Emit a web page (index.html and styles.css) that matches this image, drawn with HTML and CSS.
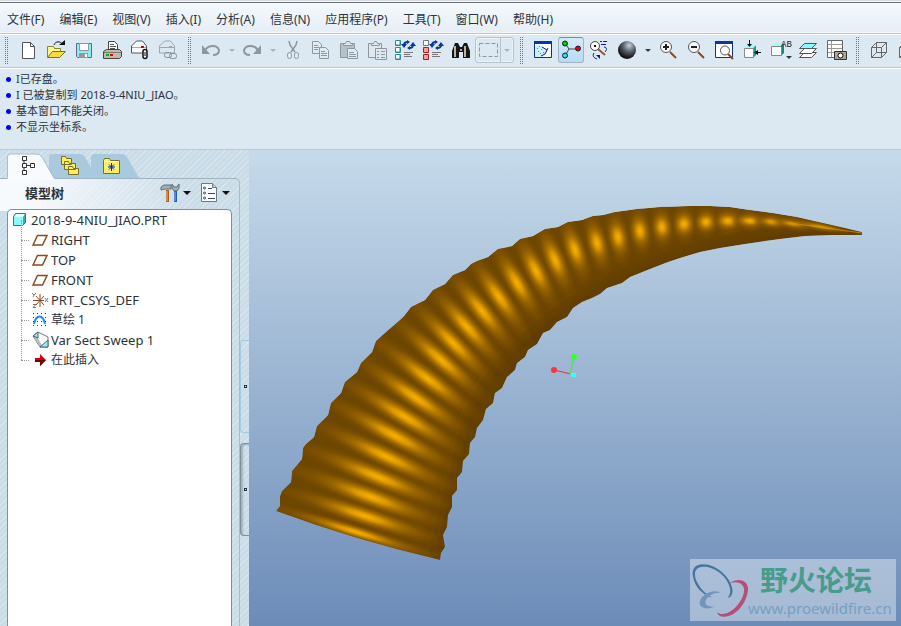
FILE: index.html
```html
<!DOCTYPE html>
<html lang="zh-CN">
<head>
<meta charset="utf-8">
<title>2018-9-4NIU_JIAO</title>
<link rel="stylesheet" href="styles.css">
</head>
<body>
<nav class="menubar">
  <button>文件(F)</button><button>编辑(E)</button><button>视图(V)</button><button>插入(I)</button><button>分析(A)</button><button>信息(N)</button><button>应用程序(P)</button><button>工具(T)</button><button>窗口(W)</button><button>帮助(H)</button>
</nav>

<div class="toolbar">
  <span class="grip"></span>
  <div class="group">
    <button class="tool" aria-label="新建"><svg viewBox="0 0 20 20"><path d="M4.500 2.500h8l4 4v12h-12z" fill="#fff" stroke="#555"/><path d="M12.500 2.500v4h4" fill="none" stroke="#555"/></svg></button>
    <button class="tool" aria-label="打开"><svg viewBox="0 0 20 20"><path d="M1.500 17V6.500h6l1 2h6v3" fill="#fffb90" stroke="#8a8433"/><path d="M1.500 17.500l5-6h13l-6 6z" fill="#f6dc45" stroke="#77712b"/><path d="M8 5c1-4 7-4 8-1" fill="none" stroke="#111"/><path d="M13 5h6V0z" fill="#111"/></svg></button>
    <button class="tool" aria-label="保存"><svg viewBox="0 0 20 20"><path d="M2.500 3.500h15v14h-14l-1-1z" fill="#8aeef0" stroke="#668"/><path d="M5.500 3.500h9v7h-9z" fill="#fff" stroke="#89a"/><path d="M5 13h9v5H5z" fill="#999"/><path d="M11 14h2v3h-2z" fill="#fff"/></svg></button>
    <button class="tool" aria-label="打印"><svg viewBox="0 0 20 20"><path d="M6.500 10V1.500h6l3 3V10" fill="#fff" stroke="#444"/><path d="M8 4.500h4M8 6.500h6M8 8.500h5" stroke="#555"/><path d="M1.500 11.500l3-2h13l2 2v5l-2 2h-16z" fill="#bdbab0" stroke="#444"/><path d="M2 12.500h17" stroke="#777"/><path d="M4 14h3v2H4z" fill="#0b0"/><path d="M8 14h3v2H8z" fill="#e00"/></svg></button>
    <button class="tool" aria-label="发送"><svg viewBox="0 0 20 20"><path d="M1.500 13V6l5-5h6l4 5v7z" fill="#fff" stroke="#555"/><path d="M2 7.500h14" stroke="#aaa"/><path d="M11 6h3v2h-3z" fill="#d00"/><rect x="13" y="9.500" width="4" height="9" rx="2" fill="#fff" stroke="#111" stroke-width="1.500"/><path d="M15 12v4" stroke="#111"/></svg></button>
    <button class="tool" aria-label="发送链接"><svg viewBox="0 0 20 20"><path d="M1.500 13V6l5-5h6l4 5v7z" fill="#dde7f0" stroke="#9aa9b7"/><path d="M2 7.500h14M11 6.500h3" stroke="#9aa9b7"/><rect x="6.500" y="12.500" width="7" height="5" rx="2" fill="none" stroke="#858f9a"/><rect x="11.500" y="13.500" width="7" height="5" rx="2" fill="none" stroke="#858f9a"/></svg></button>
  </div>
  <span class="grip"></span>
  <div class="group">
    <button class="tool" aria-label="撤消"><svg viewBox="0 0 20 20"><path d="M4 11c2-6 12-7 14-1 0 3-2 5-6 5" fill="none" stroke="#8d979f" stroke-width="2"/><path d="M1 5v9h8z" fill="#8d979f"/></svg></button>
    <button class="drop dim" aria-label="撤消列表"></button>
    <button class="tool" aria-label="重做"><svg viewBox="0 0 20 20"><path d="M16 11C14 5 4 4 2 10c0 3 2 5 6 5" fill="none" stroke="#8d979f" stroke-width="2"/><path d="M19 5v9h-8z" fill="#8d979f"/></svg></button>
    <button class="drop dim" aria-label="重做列表"></button>
    <button class="tool" aria-label="剪切"><svg viewBox="0 0 20 20" fill="none" stroke="#8d979f"><path d="M6 1l1 4 5 7M14 1l-1 4-5 7" stroke-width="1.500"/><rect x="4.500" y="12.500" width="4" height="6" rx="2"/><rect x="11.500" y="12.500" width="4" height="6" rx="2"/></svg></button>
    <button class="tool" aria-label="复制"><svg viewBox="0 0 20 20" fill="#e0eaf1" stroke="#8d979f"><path d="M1.500 1.500h6l3 3v9h-9z"/><path d="M3 5.500h4M3 7.500h5M3 9.500h4"/><path d="M8.500 7.500h6l3 3v8h-9z"/><path d="M10 11.500h4M10 13.500h6M10 15.500h6"/></svg></button>
    <button class="tool" aria-label="粘贴"><svg viewBox="0 0 20 20" fill="#b7c1c8" stroke="#8d979f"><path d="M1.500 3.500h14v14h-14z"/><path d="M4.500 5.500v-2h2l1-2h3l1 2h2v2z" fill="#dce6ed"/><path d="M8.500 8.500h7l3 3v7h-10z" fill="#e0eaf1"/><path d="M10 12.500h5M10 14.500h7M10 16.500h7"/></svg></button>
    <button class="tool" aria-label="选择性粘贴"><svg viewBox="0 0 20 20" fill="#dfe8ee" stroke="#8d979f"><path d="M1.500 3.500h13v14h-13z"/><path d="M4.500 5.500v-2h2l1-2h2l1 2h2v2z"/><path d="M8.500 8.500h11v11h-11z"/><path d="M10 11.500h2M14 11.500h4M10 14.500h2M14 14.500h4M10 17.500h2M14 17.500h4"/></svg></button>
    <button class="tool" aria-label="再生"><svg viewBox="0 0 20 20"><g fill="#fff" stroke="#2d8d8d"><path d="M.5.5h5v5h-5zM.5 7.500h5v5h-5zM.5 14.500h5v5h-5z"/></g><path d="M5 1v4H1M5 8v4H1M5 15v4H1" fill="none" stroke="#2d8d8d"/><g fill="none" stroke="#0836a4" stroke-width="2"><path d="M9 5c0-2 1-3 4-3M18 5c0 2-1 3-4 3"/></g><path d="M6 4h6L9 8zM15 6h6l-3-4zM12 0v4l3-2zM15 6v4l-3-2z" fill="#0836a4"/><path d="M9 12.500h9M9 14.500h6M9 16.500h8" stroke="#777"/></svg></button>
    <button class="tool" aria-label="再生管理器"><svg viewBox="0 0 20 20"><path d="M.5.500h5v5h-5z" fill="#fff" stroke="#777"/><path d="M.5 7.500h5v5h-5zM.5 14.500h5v5h-5z" fill="#ff9a9a" stroke="#b01c1c"/><g fill="none" stroke="#0836a4" stroke-width="2"><path d="M9 5c0-2 1-3 4-3M18 5c0 2-1 3-4 3"/></g><path d="M6 4h6L9 8zM15 6h6l-3-4zM12 0v4l3-2zM15 6v4l-3-2z" fill="#0836a4"/><path d="M9 12.500h9M9 14.500h6M9 16.500h8" stroke="#777"/></svg></button>
    <button class="tool" aria-label="查找"><svg viewBox="0 0 20 20"><path d="M4 3h3l2 4h2l2-4h3l3 8v7h-7v-6H8v6H1v-7z" fill="#161616"/><path d="M4 6v11M14 6v11" stroke="#b8b5a0" stroke-width="2"/><path d="M9 9h2v2H9z" fill="#aaa"/></svg></button>
    <span class="select-box"><button class="tool" aria-label="选取框"><svg viewBox="0 0 20 20"><path d="M1.500 3.500h18v13h-18z" fill="none" stroke="#8997a3" stroke-dasharray="4 2"/></svg></button><button class="drop dim" aria-label="选取列表"></button></span>
  </div>
  <span class="grip"></span>
  <div class="group">
    <button class="tool" aria-label="重画"><svg viewBox="0 0 20 20"><path d="M1.500 1.500h17v16h-17z" fill="#fff" stroke="#0a3589"/><path d="M1 1h18v3H1z" fill="#0639a0"/><path d="M2 5l7 1 6 5-5 6H2z" fill="#cdf0ff"/><path d="M8 16l4-2 2-4 1-2M9 7l5 3" stroke="#15205e" fill="none"/><path d="M4 8.500h1M6 6.500h1M5 11.500h1M8 9.500h1M10 12.500h1M7 13.500h1" stroke="#0ad"/></svg></button>
    <button class="tool pressed" aria-label="旋转中心"><svg viewBox="0 0 20 20"><path d="M4 3l4 6h8M8 9l-4 7" fill="none" stroke="#444"/><g stroke="#123"><circle cx="4" cy="3.500" r="2.500" fill="#0c0"/><circle cx="17" cy="8.500" r="2.500" fill="#e00"/><circle cx="4" cy="15.500" r="2.500" fill="#3dd"/></g></svg></button>
    <button class="tool" aria-label="定向模式"><svg viewBox="0 0 20 20"><path d="M9 9l7 6" stroke="#9d5527" stroke-width="2"/><circle cx="6" cy="6" r="4.500" fill="#fff" stroke="#444"/><path d="M5 5h2v2H5z" fill="#111"/><path d="M11 1.500h2M14 1.500h4M12 4.500h5M5 13c-2 3 0 5 3 6M15 7c3 0 3 3 1 5" fill="none" stroke="#1119a0"/><path d="M7 15h4v4z" fill="#1119a0"/></svg></button>
    <button class="tool" aria-label="外观库"><svg viewBox="0 0 20 20"><circle cx="10" cy="10" r="9" fill="url(#ball)"/></svg></button>
    <button class="drop" aria-label="外观列表"></button>
    <button class="tool" aria-label="放大"><svg viewBox="0 0 20 20"><path d="M12 12l6 6" stroke="#924619" stroke-width="2"/><circle cx="8" cy="7" r="5.500" fill="#f8fcff" stroke="#555"/><path d="M5 7h6M8 4v6" stroke="#222" stroke-width="2"/></svg></button>
    <button class="tool" aria-label="缩小"><svg viewBox="0 0 20 20"><path d="M12 12l6 6" stroke="#924619" stroke-width="2"/><circle cx="8" cy="7" r="5.500" fill="#f8fcff" stroke="#555"/><path d="M5 7h6" stroke="#222" stroke-width="2"/></svg></button>
    <button class="tool" aria-label="重新调整"><svg viewBox="0 0 20 20"><path d="M1.500 1.500h17v16h-17z" fill="#fff" stroke="#0a3589"/><path d="M1 1h18v3H1z" fill="#0639a0"/><path d="M14 14l5 5" stroke="#924619" stroke-width="2"/><circle cx="11" cy="10.500" r="4.500" fill="#fff" stroke="#555"/></svg></button>
    <button class="tool" aria-label="重定向"><svg viewBox="0 0 20 20"><path d="M11 8l3-3v10l-3 3z" fill="#1b9999"/><path d="M2 8l3-3h9l-3 3z" fill="#9ff"/><path d="M2.500 8.500h9v9h-9z" fill="#fff" stroke="#888"/><path d="M7.500 0v5M13 12.500h6" stroke="#111"/><path d="M5 4h5L7.500 7zM16 10v5l-4-2.500z" fill="#111"/></svg></button>
    <button class="tool" aria-label="已命名视图"><svg viewBox="0 0 20 20"><path d="M11 6l3-3v10l-3 3z" fill="#188"/><path d="M2 6l3-3h6v3z" fill="#9ff"/><path d="M1.500 6.500h10v9h-10z" fill="#fff" stroke="#888"/><text x="11" y="7" class="ab">AB</text><path d="M16 16h6l-3 3z" fill="#333"/></svg></button>
    <button class="tool" aria-label="层"><svg viewBox="0 0 20 20" fill="#fff" stroke="#555"><path d="M1.500 17.500h12l5-5h-12z"/><path d="M1.500 13.500h12l5-5h-12z"/><path d="M1.500 8.500h12l5-5h-12z" fill="#8ff"/></svg></button>
    <button class="tool" aria-label="视图管理器"><svg viewBox="0 0 20 20"><path d="M1.500.500h15v17h-15z" fill="#fff" stroke="#666"/><path d="M5.500 1v16M2 4.500h14M2 8.500h14M2 12.500h14" stroke="#999"/><path d="M8.500 11.500h12v8h-12z" fill="#aaa797" stroke="#333"/><circle cx="14.500" cy="15.500" r="2.500" fill="#fff" stroke="#111"/></svg></button>
  </div>
  <span class="grip"></span>
  <div class="group">
    <button class="tool" aria-label="线框"><svg viewBox="0 0 20 20" fill="none" stroke="#666"><path d="M2.500 7.500h10v10h-10zM7.500 2.500h10v10h-10zM2.500 7.500l5-5M12.500 7.500l5-5M2.500 17.500l5-5M12.500 17.500l5-5"/></svg></button>
    <button class="tool" aria-label="隐藏线"><svg viewBox="0 0 20 20" fill="none" stroke="#666"><path d="M2.500 7.500h10v10h-10zM7.500 2.500h10v10h-10zM2.500 7.500l5-5M12.500 7.500l5-5M2.500 17.500l5-5"/></svg></button>
  </div>
</div>

<ul class="messages">
  <li>I已存盘。</li>
  <li>I 已被复制到 2018-9-4NIU_JIAO。</li>
  <li>基本窗口不能关闭。</li>
  <li>不显示坐标系。</li>
</ul>

<div class="workspace">
  <aside class="sidebar">
    <div class="tabs">
      <button class="tab" aria-label="模型树"><svg viewBox="0 0 48 26"><path d="M.5 27V4q0-3 3-3H29q4 0 6 3l13 23z" fill="#f8fbfe"/><path d="M.5 25V4q0-3 3-3H29q4 0 6 3l12 21" fill="none" stroke="#a8bcca"/><g fill="#fff" stroke="#333"><path d="M17 6v14M17 12.500h6" /><path d="M15.500 3.500h4v4h-4zM15.500 10.500h4v4h-4zM15.500 17.500h4v4h-4zM23.500 10.500h4v4h-4z"/></g></svg></button>
      <button class="tab" aria-label="文件夹浏览器"><svg viewBox="0 0 48 26"><path d="M0 25V4q0-3 3-3h27q4 0 6 3l12 21z" fill="#a9c9df"/><g fill="#ffec58" stroke="#77702a"><path d="M12.500 11.500v-8h4l1 2h5v6zM15.500 16.500v-8h4l1 2h6v6zM19.500 21.500v-8h4l1 2h5v6z"/></g></svg></button>
      <button class="tab" aria-label="收藏夹"><svg viewBox="0 0 48 26"><path d="M0 25V4q0-3 3-3h27q4 0 6 3l12 21z" fill="#a9c9df"/><path d="M12.500 20.500v-13l1-2h5l1 2h9v13z" fill="#fff06a" stroke="#77702a"/><path d="M13 8.500h15" stroke="#fff"/><path d="M20.500 10v8M17 14h7M18 11.500l5 5M23 11.500l-5 5" stroke="#1020c0"/></svg></button>
    </div>
    <div class="dock">
      <section class="panel">
        <header class="panel-head">
          <h2>模型树</h2>
          <button class="tool" aria-label="设置"><svg viewBox="0 0 20 20"><path d="M7.500 7v12" stroke="#b05a1c" stroke-width="3"/><path d="M7 8v10" stroke="#ffb868"/><path d="M1 7V4l3-2h7v4H5z" fill="#9db2ba" stroke="#5d6d75"/><path d="M15.500 8v11" stroke="#2459c0" stroke-width="3"/><path d="M15 9v9" stroke="#8bbcff"/><path d="M12 1v4l2 3h3l2-3V1l-2 3h-3z" fill="#9db2ba" stroke="#5d6d75"/></svg></button>
          <button class="drop strong" aria-label="设置列表"></button>
          <button class="tool" aria-label="显示"><svg viewBox="0 0 20 20"><path d="M2.500.5h11l4 4v14h-15z" fill="#f7faff" stroke="#6a7888"/><path d="M13.500.5v4h4" fill="#bcd" stroke="#6a7888"/><g fill="none" stroke="#445"><circle cx="5.500" cy="5" r="1"/><circle cx="5.500" cy="10" r="1"/><circle cx="5.500" cy="15" r="1"/><path d="M9 5.500h4M9 10.500h7M9 15.500h7"/></g></svg></button>
          <button class="drop strong" aria-label="显示列表"></button>
        </header>
        <div class="tree">
          <div class="root"><svg class="node" viewBox="0 0 16 16"><path d="M1.500 4.500l2-3h10v9l-3 3h-9z" fill="#4aa5a8" stroke="#3c7377"/><path d="M2 5h9v8H2z" fill="#8ff8ff"/><path d="M2 5l2-3h9l-2 3z" fill="#d9ffff"/></svg>2018-9-4NIU_JIAO.PRT</div>
          <ul class="branch">
            <li><svg class="node" viewBox="0 0 16 16"><path d="M1 13l4.500-9.500H15L10.500 13z" fill="#fff" stroke="#8b4a1c" stroke-width="1.500"/></svg>RIGHT</li>
            <li><svg class="node" viewBox="0 0 16 16"><path d="M1 13l4.500-9.500H15L10.500 13z" fill="#fff" stroke="#8b4a1c" stroke-width="1.500"/></svg>TOP</li>
            <li><svg class="node" viewBox="0 0 16 16"><path d="M1 13l4.500-9.500H15L10.500 13z" fill="#fff" stroke="#8b4a1c" stroke-width="1.500"/></svg>FRONT</li>
            <li><svg class="node" viewBox="0 0 16 16" fill="none"><path d="M1 8.500h11M8 2v13M4 4l8 9M12 4l-8 9" stroke="#8b4a1c"/><path d="M0 1l2 2 2-2M2 3l-1 2M1 12.500h3l-3 3h3M13 6l3 4M16 6l-3 4" stroke="#777"/></svg>PRT_CSYS_DEF</li>
            <li class="cjk"><svg class="node" viewBox="0 0 16 16"><path d="M1 1.500h14M1 5.500h14M1 9.500h14M1 13.500h14" stroke="#223078" stroke-dasharray="1 3"/><path d="M2 12c2-10 9-10 11 0" fill="none" stroke="#148bff" stroke-width="2"/></svg>草绘 1</li>
            <li><svg class="node" viewBox="0 0 16 16"><path d="M1 4l5-4 10 5v10H8z" fill="#fff" stroke="#777"/><path d="M1 4l7 11h3L5 5z" fill="#bbb"/><path d="M1 4l5-4v6zM8 15l8-7v7z" fill="#94edee" stroke="#467"/></svg>Var Sect Sweep 1</li>
            <li class="cjk"><svg class="node" viewBox="0 0 16 16"><path d="M3 6h5V2l6 6-6 6v-4H3z" fill="#d80000"/><path d="M3 8h11l-6 6v-4H3z" fill="#6d0000"/></svg>在此插入</li>
          </ul>
        </div>
      </section>
      <div class="sashes"><button class="sash" aria-label="浏览器"></button><button class="sash raised" aria-label="导航器"></button></div>
    </div>
  </aside>

  <main class="view">
    <svg class="model" viewBox="249 150 652 476" role="img" aria-label="牛角模型">
      <defs>
        <radialGradient id="ball" cx=".62" cy=".25" r=".7"><stop offset="0" stop-color="#c5d2dc"/><stop offset=".5" stop-color="#56606a"/><stop offset="1" stop-color="#111"/></radialGradient>
        <radialGradient id="band"><stop offset="0" stop-color="#966300"/><stop offset=".55" stop-color="#8b5a00" stop-opacity=".75"/><stop offset="1" stop-color="#7a4e00" stop-opacity="0"/></radialGradient>
        <radialGradient id="shine"><stop offset="0" stop-color="#fbb300"/><stop offset=".3" stop-color="#e6a000" stop-opacity=".85"/><stop offset=".65" stop-color="#b87c00" stop-opacity=".4"/><stop offset="1" stop-color="#905e00" stop-opacity="0"/></radialGradient>
        <filter id="soft" x="-10%" y="-10%" width="120%" height="120%"><feGaussianBlur stdDeviation="9"/></filter>
        <clipPath id="outline"><path id="horn" d="M276 511L280 506 280 496 282 491 291 482 292 471 302 459 303 448 306 444 314 437 317 426 328 415 331 403 341 393 345 382 357 372 361 363 372 352 376 341 387 331 400 320 404 316 411 307 415 305 425 300 433 290 445 284 453 275 465 270 471 264 477 261 488 257 498 249 512 246 520 239 533 236 545 229 558 227 568 222 582 220 593 216 603 215 615 212 637 209 660 207 690 206 710 206 730 207 750 210 773 213 797 217 823 223 845 228 862 232 862 235 833 235 805 236 780 239 765 241 745 244 720 248 700 252 680 258 668 262 650 269 630 277 622 283 607 288 600 294 592 298 582 302 573 308 567 317 557 322 550 330 543 333 537 344 528 350 525 357 517 363 515 370 507 377 502 388 495 393 493 403 486 409 483 420 477 428 475 437 470 443 469 454 463 461 462 472 457 478 457 490 452 496 452 507 448 515 447 527 443 535 445 547 441 553 440 560Q355 540 276 511z"/></clipPath>
        <g id="rib"><ellipse rx="1.200" ry="1.150" fill="url(#band)"/><ellipse rx=".72" ry=".95" fill="url(#shine)"/></g>
      </defs>
      <g clip-path="url(#outline)">
        <use href="#horn" fill="#6d4600"/>
        <use href="#rib" transform="translate(356 532) rotate(17) scale(90 7)"/>
        <use href="#rib" transform="translate(365 516) rotate(18) scale(88 10)"/>
        <use href="#rib" transform="translate(371 497) rotate(20) scale(86 11)"/>
        <use href="#rib" transform="translate(378 477) rotate(22) scale(84 11)"/>
        <use href="#rib" transform="translate(387 457) rotate(25) scale(82 11)"/>
        <use href="#rib" transform="translate(395 436) rotate(28) scale(80 11)"/>
        <use href="#rib" transform="translate(405 417) rotate(31) scale(77 11)"/>
        <use href="#rib" transform="translate(416 398) rotate(34) scale(74 11)"/>
        <use href="#rib" transform="translate(428 379) rotate(37) scale(70 11)"/>
        <use href="#rib" transform="translate(441 360) rotate(41) scale(66 11)"/>
        <use href="#rib" transform="translate(453 343) rotate(45) scale(62 11)"/>
        <use href="#rib" transform="translate(467 327) rotate(48) scale(58 11)"/>
        <use href="#rib" transform="translate(482 311) rotate(51) scale(54 11)"/>
        <use href="#rib" transform="translate(499 297) rotate(55) scale(50 11)"/>
        <use href="#rib" transform="translate(517 283) rotate(59) scale(46 11)"/>
        <use href="#rib" transform="translate(536 271) rotate(63) scale(42 11)"/>
        <use href="#rib" transform="translate(555 260) rotate(67) scale(38 11)"/>
        <use href="#rib" transform="translate(575 250) rotate(71) scale(34 11)"/>
        <use href="#rib" transform="translate(597 243) rotate(75) scale(30 11)"/>
        <use href="#rib" transform="translate(618 237) rotate(79) scale(27 11)"/>
        <use href="#rib" transform="translate(640 231) rotate(82) scale(24 11)"/>
        <use href="#rib" transform="translate(662 227) rotate(85) scale(21 11)"/>
        <use href="#rib" transform="translate(684 224) rotate(88) scale(18 12)"/>
        <use href="#rib" transform="translate(706 222) rotate(90) scale(15 12)"/>
        <use href="#rib" transform="translate(728 221) rotate(92) scale(13 14)"/>
        <use href="#rib" transform="translate(750 221) rotate(94) scale(10 16)"/>
        <use href="#rib" transform="translate(773 222) rotate(96) scale(8 18)"/>
        <use href="#rib" transform="translate(795 224) rotate(98) scale(7 22)"/>
        <use href="#rib" transform="translate(822 227) rotate(100) scale(5 30)"/>
        <path d="M862 236Q700 237 592 300T470 445l-30 116" fill="none" stroke="#4b2f00" stroke-opacity=".55" stroke-width="16" filter="url(#soft)"/>
        <path d="M790 223l72 10" stroke="#d99500" stroke-opacity=".7"/>
      </g>
      <path d="M554 370l17 4" stroke="#f03030"/><path d="M570 374l4-17" stroke="#30f030"/>
      <circle cx="554" cy="370" r="3" fill="#f33"/><circle cx="574" cy="357" r="3" fill="#3f3"/><path d="M570 373h6v4h-4z" fill="#3ff"/>
    </svg>
    <div class="watermark">
      <svg viewBox="0 0 60 62" fill-rule="evenodd"><path d="M3 17C1 5 10 3 19 5 33 9 43 21 44 31c0 5-2 8-5 8 4-5 3-10 0-16C34 13 22 6 13 7 3 8 4 17 8 24c3 6 8 11 15 15C13 36 5 28 3 17z" fill="#45759f"/><path d="M41 24c8-6 18-4 19 5 0 12-9 26-20 29-7 2-11 0-12-4 4 3 9 2 14-1 8-5 14-15 14-22 0-6-6-10-15-7z" fill="#b54e78"/><path d="M32 34c-9-5-20 2-22 9-1 7 7 9 16 5-6 1-11-1-10-5 1-5 8-10 16-9z" fill="#7094bc"/></svg>
      <div><strong>野火论坛</strong><span>www.proewildfire.cn</span></div>
    </div>
  </main>
</div>
</body>
</html>
```
FILE: styles.css
```css
* { box-sizing: border-box; }
body {
  margin: 0;
  height: 100vh;
  display: flex;
  flex-direction: column;
  overflow: hidden;
  background: #dce9f2;
  color: #2c333a;
  font: 12px/16px "Noto Sans", "Noto Sans CJK SC", sans-serif;
}
button {
  margin: 0;
  padding: 0;
  border: 0;
  background: none;
  color: inherit;
  font: inherit;
}
ul { list-style: none; margin: 0; padding: 0; }
svg { display: block; overflow: visible; }

.menubar {
  display: flex;
  flex: none;
  gap: 15px;
  height: 34px;
  padding: 5px 7px 0;
  border-top: 1px solid #d5dbe0;
  border-bottom: 1px solid #b4c8d8;
  background: linear-gradient(#6b7075 0 1px, transparent 1px) 0 1px / 100% 2px no-repeat, linear-gradient(#f4fafd, #e6edf5);
  box-shadow: inset 0 -1px #f0f5fa;
  white-space: nowrap;
}

.toolbar {
  display: flex;
  flex: none;
  align-items: center;
  gap: 5px;
  height: 34px;
  padding: 0 0 2px 4px;
  border-top: 1px solid #fff;
  border-bottom: 1px solid #b4c8d8;
  overflow: hidden;
}
.grip {
  flex: none;
  width: 4px;
  height: 27px;
  background: conic-gradient(#4c84ab 90deg, transparent 0) 0 0 / 2px 2px;
}
.group { display: flex; flex: none; align-items: center; padding-left: 1px; }
.tool {
  display: grid;
  place-items: center;
  flex: none;
  width: 28px;
  height: 26px;
}
.tool svg { width: 20px; height: 20px; }
.drop { flex: none; width: 13px; height: 26px; display: grid; place-items: center; }
.drop::before {
  content: "";
  border: 3px solid transparent;
  border-top-color: #333b42;
  border-bottom: 0;
}
.dim::before { border-top-color: #a8b4bd; }
.strong::before { border-width: 4px 4px 0; border-top-color: #111; }
.select-box {
  display: flex;
  border: 1px solid #b3c3cf;
  border-radius: 3px;
  box-shadow: inset 0 0 0 1px #edf4f8;
}
.select-box .tool { width: 25px; height: 24px; border-right: 1px solid #b3c3cf; }
.select-box .drop { width: 12px; height: 24px; }
.pressed {
  width: 26px;
  margin: 0 1px;
  border: 1px solid #a3b4c1;
  border-top-color: #7c8a96;
  border-radius: 3px;
  background: linear-gradient(#d4eaf9, #b6dbf7);
}
.ab { font: 9px "Liberation Mono", monospace; fill: #222; }

.messages {
  flex: none;
  height: 82px;
  padding: 2px 6px 0;
  border-top: 1px solid #fff;
  border-bottom: 1px solid #b9cbd9;
  font-size: 11px;
}
.messages li { display: flex; align-items: center; gap: 5px; height: 16px; }
.messages li::before { content: ""; width: 5px; height: 5px; border-radius: 50%; background: #00e; }

.workspace { display: flex; flex: 1; min-height: 0; }
.sidebar {
  display: flex;
  flex-direction: column;
  flex: none;
  width: 249px;
  padding-top: 3px;
  background: repeating-linear-gradient(135deg, #cadce8 0 3px, #d8e6ee 3px 4px);
}
.tabs { display: flex; flex: none; height: 25px; padding-left: 7px; }
.tab { width: 42px; height: 26px; }
.tab svg { width: 48px; height: 26px; }
.tab:first-child { position: relative; z-index: 1; }
.dock { display: flex; flex: 1; min-height: 0; }
.panel {
  display: flex;
  flex: 1;
  flex-direction: column;
  padding: 0 7px;
  border-top: 1px solid #9fb3c1;
  border-right: 1px solid #a9bcc8;
  border-radius: 0 5px 0 0;
  background: linear-gradient(90deg, #f7fafd, #f7fafd 30px, transparent 190px) 0 0 / 100% 32px no-repeat;
}
.panel-head { display: flex; flex: none; align-items: center; height: 30px; padding: 0 0 2px 18px; }
.panel-head h2 { flex: 1; margin: 0; font-size: 13px; line-height: 20px; }
.panel-head .tool { width: 21px; margin-left: 5px; }
.tree {
  flex: 1;
  padding: 0 4px;
  border: 1px solid #5f9db2;
  border-bottom: 0;
  border-radius: 5px 5px 0 0;
  background: #fff;
  font-size: 13px;
  line-height: 20px;
  white-space: nowrap;
}
.root, .branch li { display: flex; align-items: center; gap: 3px; height: 20px; }
.node { flex: none; width: 16px; height: 16px; }
.branch { padding-left: 9px; }
.branch li { position: relative; }
.branch li::before { content: ""; width: 8px; border-top: 1px dotted #999; }
.branch li::after { content: ""; position: absolute; left: 0; top: -10px; height: 20px; border-left: 1px dotted #999; }
.branch .cjk { font-size: 12px; }
.sashes { display: flex; flex: none; flex-direction: column; gap: 10px; width: 9px; padding-top: 162px; }
.sash {
  display: grid;
  place-items: center;
  height: 93px;
  border: 1px solid #a6cadf;
  border-right: 0;
  border-radius: 4px 0 0 4px;
}
.sash::before { content: ""; width: 1px; height: 1px; border: 1px solid #26343e; background: #cde; }
.raised { border: 1px solid #808e98; border-right: 0; box-shadow: inset 2px 1px 2px #a1b3bf; }

.view {
  position: relative;
  flex: 1;
  min-width: 0;
  overflow: hidden;
  background: linear-gradient(#c6daea, #6c8cb8);
}
.model { width: 100%; height: 100%; }
.watermark {
  position: absolute;
  right: 5px;
  bottom: 5px;
  display: flex;
  height: 62px;
  width: 206px;
  background: rgba(218, 229, 240, .52);
}
.watermark svg { flex: none; width: 58px; height: 62px; }
.watermark strong, .watermark span { display: block; white-space: nowrap; }
.watermark strong { padding: 2px 0 0 12px; color: #479c8b; font: 700 28px/36px "Noto Sans CJK SC", sans-serif; }
.watermark span { color: #789fbe; font: 15px/22px "Noto Sans", sans-serif; }
```
